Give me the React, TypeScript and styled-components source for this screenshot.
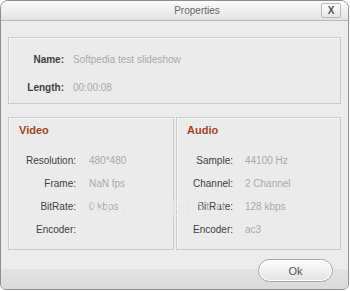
import React from 'react';
import styled, { createGlobalStyle } from 'styled-components';

const GlobalStyle = createGlobalStyle`
  body {
    margin: 0;
    background: #ffffff;
    font-family: "Liberation Sans", Arial, sans-serif;
  }
`;

const Window = styled.div`
  position: relative;
  width: 349px;
  height: 290px;
  box-sizing: border-box;
  border: 1px solid #8f8f8f;
  border-radius: 8px 8px 6px 6px;
  overflow: hidden;
  display: flex;
  flex-direction: column;
  background: #ececec;
`;

const TitleBar = styled.div`
  height: 20px;
  box-sizing: border-box;
  border-bottom: 1px solid #b8b8b8;
  background: linear-gradient(#fbfbfb, #e3e3e3);
  display: flex;
`;

const Title = styled.div`
  flex: 1;
  text-align: center;
  padding: 4px 0 0 72px;
  font-size: 10px;
  color: #666;
`;

const CloseButton = styled.button`
  width: 20px;
  height: 15px;
  margin: 2px 7px 0 0;
  padding: 0;
  box-sizing: border-box;
  border: 1px solid #b9b9b9;
  border-radius: 2px;
  background: linear-gradient(#ffffff, #e6e6e6);
  font-family: "Liberation Sans", Arial, sans-serif;
  font-weight: bold;
  font-size: 10px;
  line-height: 12px;
  color: #555;
`;

const Body = styled.div`
  padding: 16px 7px 0 7px;
  display: flex;
  flex-direction: column;
`;

const Panel = styled.div<{ $w?: number; $h: number }>`
  box-sizing: border-box;
  ${(p) => (p.$w ? `width: ${p.$w}px;` : '')}
  height: ${(p) => p.$h}px;
  border: 1px solid #c9c9c9;
  box-shadow: inset 1px 1px 0 #f8f8f8;
  background: #ebebeb;
`;

const InfoGrid = styled.div`
  display: grid;
  grid-template-columns: 55px 1fr;
  column-gap: 9px;
  row-gap: 16px;
  padding-top: 16px;
  font-size: 10px;
  line-height: 12px;
`;

const Label = styled.div<{ $bold?: boolean }>`
  text-align: right;
  color: #404040;
  font-weight: ${(p) => (p.$bold ? 'bold' : 'normal')};
`;

const Value = styled.div`
  color: #a9a9a9;
`;

const Columns = styled.div`
  display: flex;
  gap: 2px;
  margin-top: 13px;
`;

const SectionTitle = styled.div`
  padding: 6px 0 0 10px;
  font-size: 11px;
  font-weight: bold;
  line-height: 13px;
  color: #a2431b;
`;

const SpecGrid = styled.div<{ $label: number; $gap: number }>`
  display: grid;
  grid-template-columns: ${(p) => p.$label}px 1fr;
  column-gap: ${(p) => p.$gap}px;
  row-gap: 11px;
  padding-top: 18px;
  font-size: 10px;
  line-height: 12px;
`;

const Footer = styled.div`
  flex: 1;
  display: flex;
  justify-content: flex-end;
  align-items: flex-start;
  padding: 9px 15px 0 0;
  background: linear-gradient(#ececec 0, #ececec 19px, #e3e3e3 19px, #dadada 100%);
`;

const OkButton = styled.button`
  width: 75px;
  height: 23px;
  border: 1px solid #a6a6a6;
  border-radius: 12px;
  background: linear-gradient(#fefefe, #e2e2e2);
  box-shadow: inset 0 0 0 1px #ffffff;
  font-family: "Liberation Sans", Arial, sans-serif;
  font-size: 11px;
  color: #555;
`;

/* faint watermark lying over the panels, as in the screenshot */
const Watermark = styled.div`
  position: absolute;
  left: 88px;
  top: 195px;
  font-size: 23px;
  font-weight: bold;
  letter-spacing: 1px;
  color: rgba(255, 255, 255, 0.5);
  text-shadow: 0 0 1px rgba(0, 0, 0, 0.08);
  pointer-events: none;
`;

const video = [
  ['Resolution:', '480*480'],
  ['Frame:', 'NaN fps'],
  ['BitRate:', '0 kbps'],
  ['Encoder:', ''],
];

const audio = [
  ['Sample:', '44100 Hz'],
  ['Channel:', '2 Channel'],
  ['BitRate:', '128 kbps'],
  ['Encoder:', 'ac3'],
];

const Specs = ({ rows, label, gap }: { rows: string[][]; label: number; gap: number }) => (
  <SpecGrid $label={label} $gap={gap}>
    {rows.map(([k, v]) => (
      <React.Fragment key={k}>
        <Label>{k}</Label>
        <Value>{v}</Value>
      </React.Fragment>
    ))}
  </SpecGrid>
);

export default function App() {
  return (
    <>
      <GlobalStyle />
      <Window>
        <TitleBar>
          <Title>Properties</Title>
          <CloseButton>X</CloseButton>
        </TitleBar>
        <Body>
          <Panel $h={67}>
            <InfoGrid>
              <Label $bold>Name:</Label>
              <Value>Softpedia test slideshow</Value>
              <Label $bold>Length:</Label>
              <Value>00:00:08</Value>
            </InfoGrid>
          </Panel>
          <Columns>
            <Panel $w={166} $h={133}>
              <SectionTitle>Video</SectionTitle>
              <Specs rows={video} label={67} gap={13} />
            </Panel>
            <Panel $w={165} $h={133}>
              <SectionTitle>Audio</SectionTitle>
              <Specs rows={audio} label={56} gap={12} />
            </Panel>
          </Columns>
        </Body>
        <Footer>
          <OkButton>Ok</OkButton>
        </Footer>
        <Watermark>SOFTPEDIA</Watermark>
      </Window>
    </>
  );
}
